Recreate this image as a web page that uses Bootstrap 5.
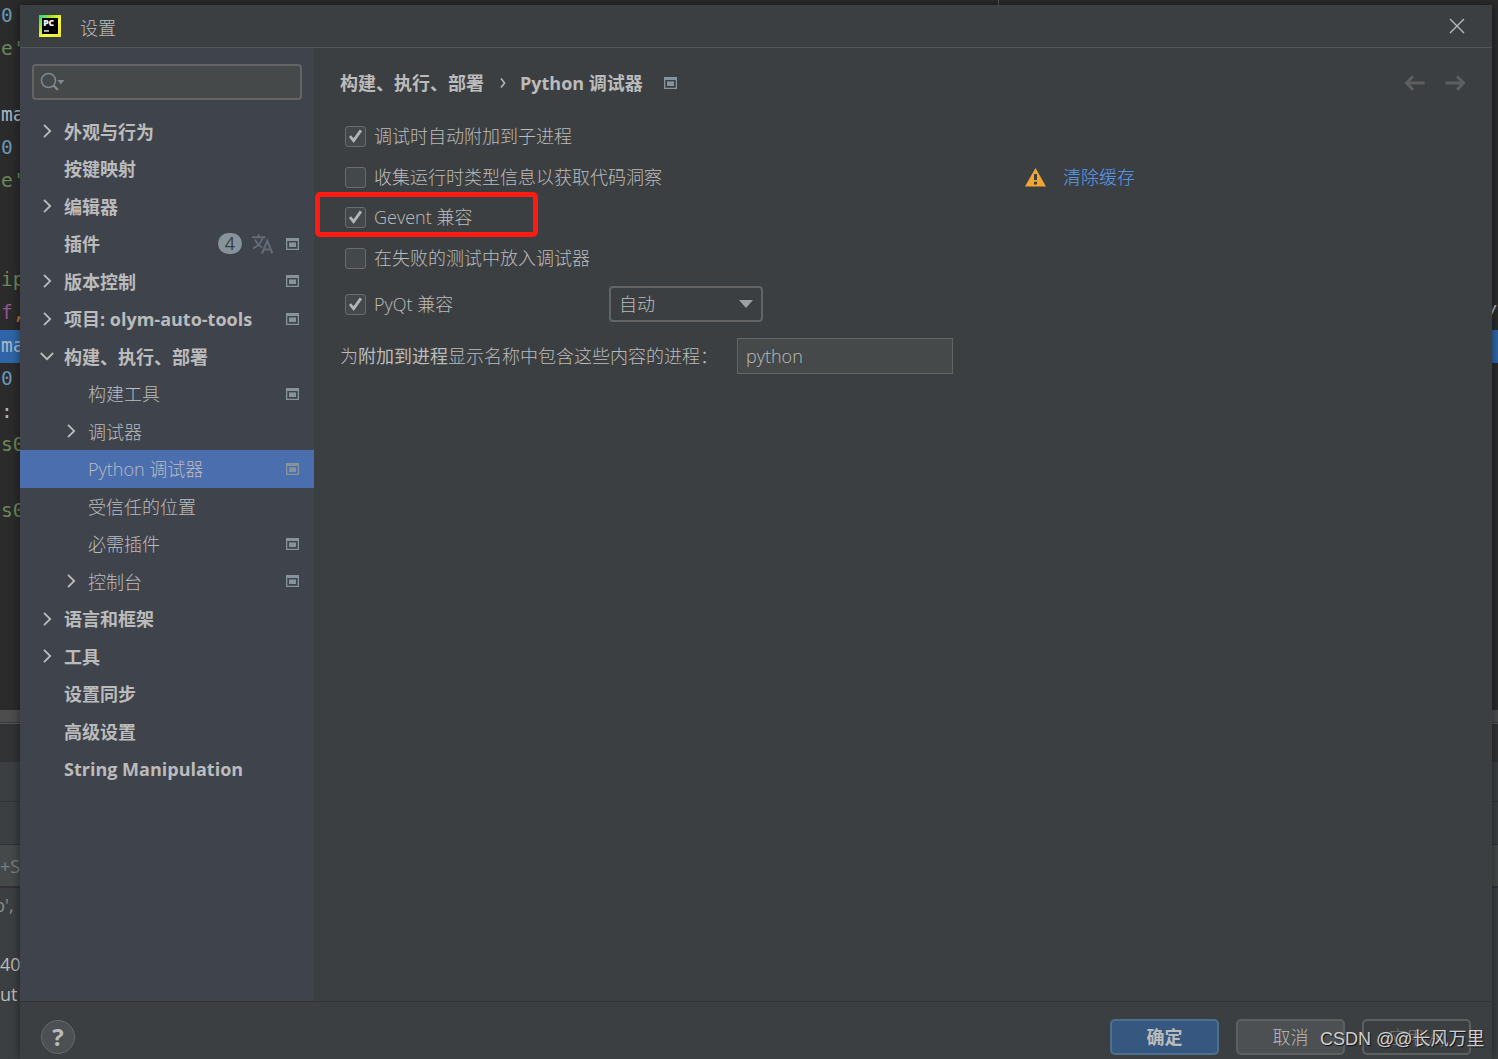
<!DOCTYPE html>
<html lang="zh-CN">
<head>
<meta charset="utf-8">
<title>设置</title>
<link href="https://cdn.jsdelivr.net/npm/bootstrap@5.3.0/dist/css/bootstrap.min.css" rel="stylesheet">
<style>
:root{--panel:#3c3f41;--side:#3f434c;--txt:#bbbbbb;--line:#5e6162;--ico:#87939a}
html,body{height:100%}
body{background:#2b2b2b;color:var(--txt);font-family:"Open Sans","Noto Sans CJK SC",sans-serif;font-size:18px;line-height:24px;overflow:hidden}
svg{display:block;flex:none}
/* editor behind the dialog */
.ide{width:1498px;height:1059px;overflow:hidden;position:relative}
.code{height:710px;font-family:"DejaVu Sans Mono",monospace;font-size:19.5px;white-space:pre;border-right:0;overflow:hidden}
.code div{height:33px;line-height:32px;padding-left:1px;margin:0}
.num{color:#6897bb}.str{color:#6a8759}.idn{color:#a9b7c6}
.code .cur{background:#2f65a8}
.scrollrow{height:13px;background:#4d4d4d;border-bottom:1px solid #3a3a3a}
.tabs-a{height:39px;background:#313335;border-top:1px solid #555;}
.strip{background:var(--panel);border-bottom:1px solid #313335}
.filter{height:43px;background:#45494a;border-bottom:2px solid #323232;color:#7c7f80;line-height:42px;white-space:nowrap}
.logs{height:171px;background:var(--panel);white-space:nowrap;line-height:30px}
.topmark{left:998px;top:0;width:1px;height:5px;background:#5a5a5a}
/* dialog */
.dialog{left:20px;top:5px;width:1472px;height:1054px;background:var(--panel);box-shadow:0 0 9px rgba(0,0,0,.5)}
.titlebar{height:43px;border-bottom:1px solid #515658;padding:0 27px 0 19px}
.cap{margin-left:19px;padding-top:3px;font-weight:300}
.sidebar{width:294px;background:var(--side);padding-top:16px}
.searchbox{height:36px;margin:0 12px 12.5px;border:2px solid #646464;border-radius:4px;background:#45494a;padding-left:6px}
.tree-row{height:37.5px;padding-left:20px;padding-right:15px}
.tree-row .arr{width:24px;flex:none}
.tree-row .lbl{font-weight:700;white-space:nowrap;padding-top:1px}
.tree-row.sub{padding-left:44px}
.tree-row.sub .lbl{font-weight:300}
.tree-row.picked{background:#4b6eaf}
.count{width:24px;height:21px;border-radius:11px;background:#87939a;color:#3c3f41;line-height:20px;text-align:center;margin-right:10px}
.main-pane{padding:20px 26px 0 26px;font-weight:300}
.crumb{height:30px;font-weight:700}
.opt{height:36px}
.chk{width:21px;height:21px;border:1.5px solid #6b6b6b;border-radius:3px;background:#43494a;margin-left:5px;margin-right:8px;flex:none}
.chk svg{margin:-1px 0 0 -1px}
.mark-red{left:295px;top:187px;width:223px;height:45px;border:5px solid #ff1b12;border-radius:5px}
.combo{width:154px;height:36px;border:2px solid #646464;border-radius:4px;padding:0 8px}
.field{width:216px;height:36px;border:1.5px solid #646464;background:#45494a;padding-left:8px}
.lnk{color:#589df6}
.foot{height:58px;border-top:1px solid #323232;padding:0 21px}
.helpbtn{width:34px;height:34px;border-radius:50%;border:1.5px solid #666a6b;background:#4c5052;font-weight:700;font-size:24px;line-height:31px;text-align:center;color:#bbb}
.dlgbtn{width:109px;height:36px;border:2px solid #5e6060;border-radius:5px;background:#4c5052;font-weight:300}
.dlgbtn.ok{background:#365880;border-color:#4c708c;font-weight:700}
.dlgbtn.off{background:transparent;color:#777}
.wmark{left:1320px;top:1027px;font-size:18px;font-family:"Liberation Sans","Noto Sans CJK SC",sans-serif;white-space:nowrap;color:#d0d0d0;text-shadow:1px 1px 1px #111}
</style>
<script src="https://cdn.jsdelivr.net/npm/bootstrap@5.3.0/dist/js/bootstrap.bundle.min.js"></script>
</head>
<body>
<svg width="0" height="0" class="position-absolute">
<defs>
<symbol id="win" viewBox="0 0 13 12"><path fill="#87939a" fill-rule="evenodd" d="M0 0h13v12H0zM1.3 3v7.7h10.4V3z"/><path fill="#87939a" d="M3 4.4h7v4.6H3z"/></symbol>
<symbol id="right" viewBox="0 0 14 14"><path fill="none" stroke="#bbb" stroke-width="1.8" d="M4 .8 10.2 7 4 13.2"/></symbol>
<symbol id="down" viewBox="0 0 14 14"><path fill="none" stroke="#bbb" stroke-width="1.8" d="M.8 4 7 10.2 13.2 4"/></symbol>
<symbol id="tick" viewBox="0 0 20 20"><path fill="none" stroke="#b5b5b5" stroke-width="2.8" d="M5 10.2 8.6 14.6 15.9 4.4"/></symbol>
</defs>
</svg>
<div class="ide">
  <div class="code"><div class="num">0</div><div class="str">e'</div><div></div><div class="idn">ma</div><div class="num">0</div><div class="str">e'</div><div></div><div></div><div class="str">ip</div><div class="d-flex justify-content-between"><span><span style="color:#94558d">f</span><span style="color:#cc7832">,</span></span><span class="idn">/</span></div><div class="cur idn">ma</div><div class="num">0</div><div class="idn">:</div><div class="str">s0</div><div></div><div class="str">s0</div></div>
  <div class="scrollrow"></div>
  <div class="tabs-a"></div>
  <div class="strip" style="height:40px"></div>
  <div class="strip" style="height:43px"></div>
  <div class="filter">+S</div>
  <div class="logs"><div style="color:#8a8a8a;margin-left:-6px;padding-top:2px">b',</div><div style="height:29px"></div><div>40</div><div>ut</div></div>
  <div class="topmark position-absolute"></div>

  <div class="dialog position-absolute d-flex flex-column">
    <div class="titlebar d-flex align-items-center flex-shrink-0">
      <svg width="22" height="22" viewBox="0 0 22 22"><defs><linearGradient id="pc" x1="0" y1="0" x2="1" y2="1"><stop offset="0" stop-color="#21d789"/><stop offset=".35" stop-color="#b5e827"/><stop offset=".6" stop-color="#fcf84a"/><stop offset="1" stop-color="#e8e337"/></linearGradient></defs><path fill="url(#pc)" d="M0 0h22v22H0z"/><path d="M3 3h16v16H3z"/><path fill="#fff" d="M5 15.3h5v1.3H5z"/><text x="4.2" y="11" font-family="Open Sans" font-weight="800" font-size="8.6" fill="#fff">PC</text></svg>
      <span class="cap">设置</span>
      <svg class="ms-auto" width="16" height="16" viewBox="0 0 16 16"><path stroke="#bbb" stroke-width="1.3" d="M1 1l14 14M15 1 1 15"/></svg>
    </div>
    <div class="d-flex flex-grow-1">
      <div class="sidebar flex-shrink-0">
        <div class="searchbox d-flex align-items-center"><svg width="26" height="20" viewBox="0 0 26 20"><circle cx="8.5" cy="8.5" r="7" fill="none" stroke="#7f8b91" stroke-width="1.5"/><path stroke="#7f8b91" stroke-width="2.2" d="m13.2 13.2 4.7 4.7"/><path fill="#7f8b91" d="M17.3 8h7.2l-3.6 4.3z"/></svg></div>
        <div class="tree-row d-flex align-items-center"><span class="arr"><svg width="14" height="14"><use href="#right"/></svg></span><span class="lbl">外观与行为</span></div>
        <div class="tree-row d-flex align-items-center"><span class="arr"></span><span class="lbl">按键映射</span></div>
        <div class="tree-row d-flex align-items-center"><span class="arr"><svg width="14" height="14"><use href="#right"/></svg></span><span class="lbl">编辑器</span></div>
        <div class="tree-row d-flex align-items-center"><span class="arr"></span><span class="lbl me-auto">插件</span><span class="count">4</span><svg width="21" height="20" viewBox="0 0 21 20" style="margin-right:13px"><g fill="none" stroke="#646b75" stroke-width="1.9"><path d="M0 3.3h13.5M6.7.5v3M10.7 3.5C9.5 8.5 5 12.5 1 14.5M3 5.5c1.5 3.5 4.5 6.5 7.2 8"/><path stroke-width="2" d="M10 19.5 15.3 7 20.3 19.5M11.8 15.4h7"/></g></svg><svg width="13" height="12"><use href="#win"/></svg></div>
        <div class="tree-row d-flex align-items-center"><span class="arr"><svg width="14" height="14"><use href="#right"/></svg></span><span class="lbl me-auto">版本控制</span><svg width="13" height="12"><use href="#win"/></svg></div>
        <div class="tree-row d-flex align-items-center"><span class="arr"><svg width="14" height="14"><use href="#right"/></svg></span><span class="lbl me-auto">项目: olym-auto-tools</span><svg width="13" height="12"><use href="#win"/></svg></div>
        <div class="tree-row d-flex align-items-center"><span class="arr"><svg width="14" height="14"><use href="#down"/></svg></span><span class="lbl">构建、执行、部署</span></div>
        <div class="tree-row sub d-flex align-items-center"><span class="arr"></span><span class="lbl me-auto">构建工具</span><svg width="13" height="12"><use href="#win"/></svg></div>
        <div class="tree-row sub d-flex align-items-center"><span class="arr"><svg width="14" height="14"><use href="#right"/></svg></span><span class="lbl">调试器</span></div>
        <div class="tree-row sub picked d-flex align-items-center"><span class="arr"></span><span class="lbl me-auto">Python 调试器</span><svg width="13" height="12"><use href="#win"/></svg></div>
        <div class="tree-row sub d-flex align-items-center"><span class="arr"></span><span class="lbl">受信任的位置</span></div>
        <div class="tree-row sub d-flex align-items-center"><span class="arr"></span><span class="lbl me-auto">必需插件</span><svg width="13" height="12"><use href="#win"/></svg></div>
        <div class="tree-row sub d-flex align-items-center"><span class="arr"><svg width="14" height="14"><use href="#right"/></svg></span><span class="lbl me-auto">控制台</span><svg width="13" height="12"><use href="#win"/></svg></div>
        <div class="tree-row d-flex align-items-center"><span class="arr"><svg width="14" height="14"><use href="#right"/></svg></span><span class="lbl">语言和框架</span></div>
        <div class="tree-row d-flex align-items-center"><span class="arr"><svg width="14" height="14"><use href="#right"/></svg></span><span class="lbl">工具</span></div>
        <div class="tree-row d-flex align-items-center"><span class="arr"></span><span class="lbl">设置同步</span></div>
        <div class="tree-row d-flex align-items-center"><span class="arr"></span><span class="lbl">高级设置</span></div>
        <div class="tree-row d-flex align-items-center"><span class="arr"></span><span class="lbl">String Manipulation</span></div>
      </div>
      <div class="main-pane flex-grow-1">
        <div class="crumb d-flex align-items-center"><span>构建、执行、部署</span><svg width="6" height="10" viewBox="0 0 6 10" style="margin:0 14px 0 16px"><path fill="none" stroke="#bbb" stroke-width="1.5" d="M1 .5 4.6 5 1 9.500"/></svg><span>Python 调试器</span><svg width="13" height="12" style="margin-left:21px"><use href="#win"/></svg>
          <svg class="ms-auto" width="62" height="16" viewBox="0 0 62 16"><g fill="none" stroke="#5c5e60" stroke-width="3"><path d="M2 8h18.500M9 1.300 2.500 8 9 14.700M41.500 8H60M53 1.300 59.500 8 53 14.700"/></g></svg></div>
        <div class="opt d-flex align-items-center" style="margin-top:20px"><span class="chk"><svg width="20" height="20"><use href="#tick"/></svg></span><span>调试时自动附加到子进程</span></div>
        <div class="opt d-flex align-items-center" style="margin-top:5px"><span class="chk"></span><span style="width:651px">收集运行时类型信息以获取代码洞察</span><svg width="21" height="19" viewBox="0 0 21 19"><path fill="#f0a732" d="M10.500 0 21 18.500H0z"/><path fill="#3c3f41" d="M9 6h3v6H9zM9 13.700h3v2.800H9z"/></svg><a class="lnk text-decoration-none" style="margin-left:17px" href="#">清除缓存</a></div>
        <div class="opt d-flex align-items-center" style="margin-top:4px"><span class="chk"><svg width="20" height="20"><use href="#tick"/></svg></span><span>Gevent 兼容</span></div>
        <div class="opt d-flex align-items-center" style="margin-top:5px"><span class="chk"></span><span>在失败的测试中放入调试器</span></div>
        <div class="opt d-flex align-items-center" style="margin-top:10px"><span class="chk"><svg width="20" height="20"><use href="#tick"/></svg></span><span style="width:235px">PyQt 兼容</span><span class="combo d-flex align-items-center justify-content-between">自动<svg width="14" height="8" viewBox="0 0 14 8"><path fill="#9da0a2" d="M0 0h14L7 8z"/></svg></span></div>
        <div class="d-flex align-items-center" style="margin-top:16px"><span style="width:397px">为<b>附加到进程</b>显示名称中包含这些内容的进程：</span><span class="field d-flex align-items-center">python</span></div>
      </div>
    </div>
    <div class="foot d-flex flex-shrink-0 align-items-start">
      <div class="helpbtn" style="margin-top:18px">?</div>
      <div class="d-flex ms-auto" style="margin-top:17px;gap:17px"><span class="dlgbtn ok d-flex align-items-center justify-content-center">确定</span><span class="dlgbtn d-flex align-items-center justify-content-center">取消</span><span class="dlgbtn off d-flex align-items-center justify-content-center">应用(A)</span></div>
    </div>
    <div class="mark-red position-absolute"></div>
  </div>
  <div class="wmark position-absolute">CSDN @@长风万里</div>
</div>
</body>
</html>
